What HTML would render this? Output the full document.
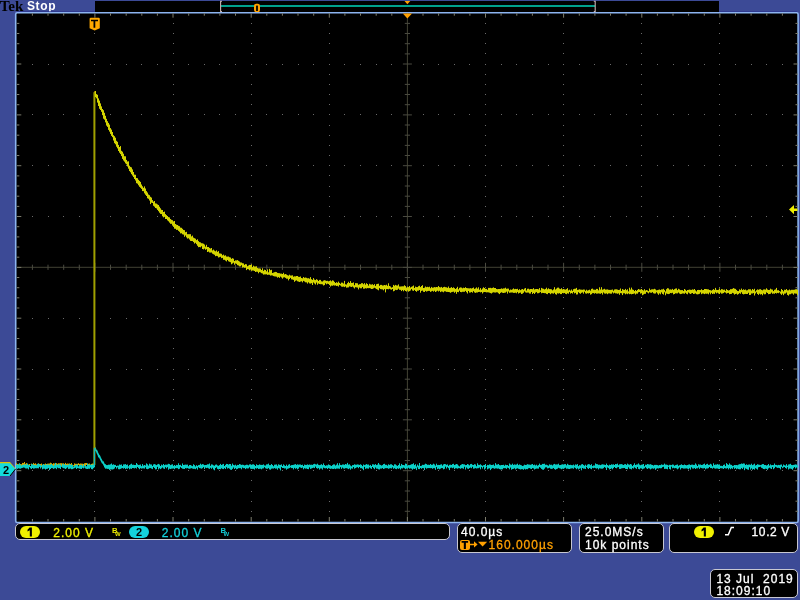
<!DOCTYPE html>
<html><head><meta charset="utf-8"><style>
html,body{margin:0;padding:0;width:800px;height:600px;overflow:hidden;background:#3c4a96}
svg{display:block;position:absolute;left:0;top:0;will-change:transform}
.box{position:absolute;background:#000;border:1px solid #c8c8d2;border-radius:5px;box-sizing:border-box;font-family:"Liberation Sans",sans-serif;font-size:12px;color:#fff;letter-spacing:1px;white-space:pre;-webkit-text-stroke:0.3px currentColor;will-change:transform}
.t{position:absolute;line-height:12px}
.badge{position:absolute;border-radius:6px;color:#000;font-weight:bold;text-align:center;font-size:11px;line-height:12px;letter-spacing:0;-webkit-text-stroke:0}
</style></head><body>
<svg width="800" height="600" viewBox="0 0 800 600">
<rect width="800" height="600" fill="#3c4a96"/>
<text x="-0.3" y="11.3" font-family="Liberation Serif" font-weight="bold" font-size="15" fill="#000">Tek</text>
<text x="27" y="9.8" font-family="Liberation Sans" font-weight="bold" font-size="12" letter-spacing="0.6" fill="#fff">Stop</text>
<rect x="17" y="11.3" width="780" height="1" fill="#2a348c"/>
<rect x="95" y="1" width="624" height="11.5" fill="#000"/>
<rect x="221" y="5" width="374" height="2" fill="#00a08c"/>
<path d="M222 1.3H220.6V11.6H222" stroke="#c8b4b4" stroke-width="1.1" fill="none"/>
<path d="M593.8 1.3H595.2V11.6H593.8" stroke="#c8b4b4" stroke-width="1.1" fill="none"/>
<rect x="254" y="3.8" width="6" height="8.4" rx="2.2" fill="#ffa000"/><rect x="256.1" y="5.6" width="1.8" height="5.4" fill="#000"/>
<path d="M404.5 1H410.3L407.4 4.2Z" fill="#ffa000"/>
<rect x="15.7" y="12.75" width="782.4" height="509.8" rx="1.5" fill="#000" stroke="#8cb4f0" stroke-width="1.6"/>
<path fill="#6a6a6a" d="M94 23h1v1h-1zM94 33h1v1h-1zM94 43h1v1h-1zM94 53h1v1h-1zM94 64h1v1h-1zM94 74h1v1h-1zM94 84h1v1h-1zM94 94h1v1h-1zM94 104h1v1h-1zM94 114h1v1h-1zM94 125h1v1h-1zM94 135h1v1h-1zM94 145h1v1h-1zM94 155h1v1h-1zM94 165h1v1h-1zM94 175h1v1h-1zM94 186h1v1h-1zM94 196h1v1h-1zM94 206h1v1h-1zM94 216h1v1h-1zM94 226h1v1h-1zM94 236h1v1h-1zM94 247h1v1h-1zM94 257h1v1h-1zM94 267h1v1h-1zM94 277h1v1h-1zM94 287h1v1h-1zM94 297h1v1h-1zM94 308h1v1h-1zM94 318h1v1h-1zM94 328h1v1h-1zM94 338h1v1h-1zM94 348h1v1h-1zM94 358h1v1h-1zM94 369h1v1h-1zM94 379h1v1h-1zM94 389h1v1h-1zM94 399h1v1h-1zM94 409h1v1h-1zM94 419h1v1h-1zM94 430h1v1h-1zM94 440h1v1h-1zM94 450h1v1h-1zM94 460h1v1h-1zM94 470h1v1h-1zM94 480h1v1h-1zM94 491h1v1h-1zM94 501h1v1h-1zM94 511h1v1h-1zM173 23h1v1h-1zM173 33h1v1h-1zM173 43h1v1h-1zM173 53h1v1h-1zM173 64h1v1h-1zM173 74h1v1h-1zM173 84h1v1h-1zM173 94h1v1h-1zM173 104h1v1h-1zM173 114h1v1h-1zM173 125h1v1h-1zM173 135h1v1h-1zM173 145h1v1h-1zM173 155h1v1h-1zM173 165h1v1h-1zM173 175h1v1h-1zM173 186h1v1h-1zM173 196h1v1h-1zM173 206h1v1h-1zM173 216h1v1h-1zM173 226h1v1h-1zM173 236h1v1h-1zM173 247h1v1h-1zM173 257h1v1h-1zM173 267h1v1h-1zM173 277h1v1h-1zM173 287h1v1h-1zM173 297h1v1h-1zM173 308h1v1h-1zM173 318h1v1h-1zM173 328h1v1h-1zM173 338h1v1h-1zM173 348h1v1h-1zM173 358h1v1h-1zM173 369h1v1h-1zM173 379h1v1h-1zM173 389h1v1h-1zM173 399h1v1h-1zM173 409h1v1h-1zM173 419h1v1h-1zM173 430h1v1h-1zM173 440h1v1h-1zM173 450h1v1h-1zM173 460h1v1h-1zM173 470h1v1h-1zM173 480h1v1h-1zM173 491h1v1h-1zM173 501h1v1h-1zM173 511h1v1h-1zM251 23h1v1h-1zM251 33h1v1h-1zM251 43h1v1h-1zM251 53h1v1h-1zM251 64h1v1h-1zM251 74h1v1h-1zM251 84h1v1h-1zM251 94h1v1h-1zM251 104h1v1h-1zM251 114h1v1h-1zM251 125h1v1h-1zM251 135h1v1h-1zM251 145h1v1h-1zM251 155h1v1h-1zM251 165h1v1h-1zM251 175h1v1h-1zM251 186h1v1h-1zM251 196h1v1h-1zM251 206h1v1h-1zM251 216h1v1h-1zM251 226h1v1h-1zM251 236h1v1h-1zM251 247h1v1h-1zM251 257h1v1h-1zM251 267h1v1h-1zM251 277h1v1h-1zM251 287h1v1h-1zM251 297h1v1h-1zM251 308h1v1h-1zM251 318h1v1h-1zM251 328h1v1h-1zM251 338h1v1h-1zM251 348h1v1h-1zM251 358h1v1h-1zM251 369h1v1h-1zM251 379h1v1h-1zM251 389h1v1h-1zM251 399h1v1h-1zM251 409h1v1h-1zM251 419h1v1h-1zM251 430h1v1h-1zM251 440h1v1h-1zM251 450h1v1h-1zM251 460h1v1h-1zM251 470h1v1h-1zM251 480h1v1h-1zM251 491h1v1h-1zM251 501h1v1h-1zM251 511h1v1h-1zM329 23h1v1h-1zM329 33h1v1h-1zM329 43h1v1h-1zM329 53h1v1h-1zM329 64h1v1h-1zM329 74h1v1h-1zM329 84h1v1h-1zM329 94h1v1h-1zM329 104h1v1h-1zM329 114h1v1h-1zM329 125h1v1h-1zM329 135h1v1h-1zM329 145h1v1h-1zM329 155h1v1h-1zM329 165h1v1h-1zM329 175h1v1h-1zM329 186h1v1h-1zM329 196h1v1h-1zM329 206h1v1h-1zM329 216h1v1h-1zM329 226h1v1h-1zM329 236h1v1h-1zM329 247h1v1h-1zM329 257h1v1h-1zM329 267h1v1h-1zM329 277h1v1h-1zM329 287h1v1h-1zM329 297h1v1h-1zM329 308h1v1h-1zM329 318h1v1h-1zM329 328h1v1h-1zM329 338h1v1h-1zM329 348h1v1h-1zM329 358h1v1h-1zM329 369h1v1h-1zM329 379h1v1h-1zM329 389h1v1h-1zM329 399h1v1h-1zM329 409h1v1h-1zM329 419h1v1h-1zM329 430h1v1h-1zM329 440h1v1h-1zM329 450h1v1h-1zM329 460h1v1h-1zM329 470h1v1h-1zM329 480h1v1h-1zM329 491h1v1h-1zM329 501h1v1h-1zM329 511h1v1h-1zM485 23h1v1h-1zM485 33h1v1h-1zM485 43h1v1h-1zM485 53h1v1h-1zM485 64h1v1h-1zM485 74h1v1h-1zM485 84h1v1h-1zM485 94h1v1h-1zM485 104h1v1h-1zM485 114h1v1h-1zM485 125h1v1h-1zM485 135h1v1h-1zM485 145h1v1h-1zM485 155h1v1h-1zM485 165h1v1h-1zM485 175h1v1h-1zM485 186h1v1h-1zM485 196h1v1h-1zM485 206h1v1h-1zM485 216h1v1h-1zM485 226h1v1h-1zM485 236h1v1h-1zM485 247h1v1h-1zM485 257h1v1h-1zM485 267h1v1h-1zM485 277h1v1h-1zM485 287h1v1h-1zM485 297h1v1h-1zM485 308h1v1h-1zM485 318h1v1h-1zM485 328h1v1h-1zM485 338h1v1h-1zM485 348h1v1h-1zM485 358h1v1h-1zM485 369h1v1h-1zM485 379h1v1h-1zM485 389h1v1h-1zM485 399h1v1h-1zM485 409h1v1h-1zM485 419h1v1h-1zM485 430h1v1h-1zM485 440h1v1h-1zM485 450h1v1h-1zM485 460h1v1h-1zM485 470h1v1h-1zM485 480h1v1h-1zM485 491h1v1h-1zM485 501h1v1h-1zM485 511h1v1h-1zM563 23h1v1h-1zM563 33h1v1h-1zM563 43h1v1h-1zM563 53h1v1h-1zM563 64h1v1h-1zM563 74h1v1h-1zM563 84h1v1h-1zM563 94h1v1h-1zM563 104h1v1h-1zM563 114h1v1h-1zM563 125h1v1h-1zM563 135h1v1h-1zM563 145h1v1h-1zM563 155h1v1h-1zM563 165h1v1h-1zM563 175h1v1h-1zM563 186h1v1h-1zM563 196h1v1h-1zM563 206h1v1h-1zM563 216h1v1h-1zM563 226h1v1h-1zM563 236h1v1h-1zM563 247h1v1h-1zM563 257h1v1h-1zM563 267h1v1h-1zM563 277h1v1h-1zM563 287h1v1h-1zM563 297h1v1h-1zM563 308h1v1h-1zM563 318h1v1h-1zM563 328h1v1h-1zM563 338h1v1h-1zM563 348h1v1h-1zM563 358h1v1h-1zM563 369h1v1h-1zM563 379h1v1h-1zM563 389h1v1h-1zM563 399h1v1h-1zM563 409h1v1h-1zM563 419h1v1h-1zM563 430h1v1h-1zM563 440h1v1h-1zM563 450h1v1h-1zM563 460h1v1h-1zM563 470h1v1h-1zM563 480h1v1h-1zM563 491h1v1h-1zM563 501h1v1h-1zM563 511h1v1h-1zM641 23h1v1h-1zM641 33h1v1h-1zM641 43h1v1h-1zM641 53h1v1h-1zM641 64h1v1h-1zM641 74h1v1h-1zM641 84h1v1h-1zM641 94h1v1h-1zM641 104h1v1h-1zM641 114h1v1h-1zM641 125h1v1h-1zM641 135h1v1h-1zM641 145h1v1h-1zM641 155h1v1h-1zM641 165h1v1h-1zM641 175h1v1h-1zM641 186h1v1h-1zM641 196h1v1h-1zM641 206h1v1h-1zM641 216h1v1h-1zM641 226h1v1h-1zM641 236h1v1h-1zM641 247h1v1h-1zM641 257h1v1h-1zM641 267h1v1h-1zM641 277h1v1h-1zM641 287h1v1h-1zM641 297h1v1h-1zM641 308h1v1h-1zM641 318h1v1h-1zM641 328h1v1h-1zM641 338h1v1h-1zM641 348h1v1h-1zM641 358h1v1h-1zM641 369h1v1h-1zM641 379h1v1h-1zM641 389h1v1h-1zM641 399h1v1h-1zM641 409h1v1h-1zM641 419h1v1h-1zM641 430h1v1h-1zM641 440h1v1h-1zM641 450h1v1h-1zM641 460h1v1h-1zM641 470h1v1h-1zM641 480h1v1h-1zM641 491h1v1h-1zM641 501h1v1h-1zM641 511h1v1h-1zM719 23h1v1h-1zM719 33h1v1h-1zM719 43h1v1h-1zM719 53h1v1h-1zM719 64h1v1h-1zM719 74h1v1h-1zM719 84h1v1h-1zM719 94h1v1h-1zM719 104h1v1h-1zM719 114h1v1h-1zM719 125h1v1h-1zM719 135h1v1h-1zM719 145h1v1h-1zM719 155h1v1h-1zM719 165h1v1h-1zM719 175h1v1h-1zM719 186h1v1h-1zM719 196h1v1h-1zM719 206h1v1h-1zM719 216h1v1h-1zM719 226h1v1h-1zM719 236h1v1h-1zM719 247h1v1h-1zM719 257h1v1h-1zM719 267h1v1h-1zM719 277h1v1h-1zM719 287h1v1h-1zM719 297h1v1h-1zM719 308h1v1h-1zM719 318h1v1h-1zM719 328h1v1h-1zM719 338h1v1h-1zM719 348h1v1h-1zM719 358h1v1h-1zM719 369h1v1h-1zM719 379h1v1h-1zM719 389h1v1h-1zM719 399h1v1h-1zM719 409h1v1h-1zM719 419h1v1h-1zM719 430h1v1h-1zM719 440h1v1h-1zM719 450h1v1h-1zM719 460h1v1h-1zM719 470h1v1h-1zM719 480h1v1h-1zM719 491h1v1h-1zM719 501h1v1h-1zM719 511h1v1h-1zM32 64h1v1h-1zM48 64h1v1h-1zM63 64h1v1h-1zM79 64h1v1h-1zM110 64h1v1h-1zM126 64h1v1h-1zM141 64h1v1h-1zM157 64h1v1h-1zM188 64h1v1h-1zM204 64h1v1h-1zM219 64h1v1h-1zM235 64h1v1h-1zM266 64h1v1h-1zM282 64h1v1h-1zM298 64h1v1h-1zM313 64h1v1h-1zM344 64h1v1h-1zM360 64h1v1h-1zM376 64h1v1h-1zM391 64h1v1h-1zM423 64h1v1h-1zM438 64h1v1h-1zM454 64h1v1h-1zM469 64h1v1h-1zM501 64h1v1h-1zM516 64h1v1h-1zM532 64h1v1h-1zM548 64h1v1h-1zM579 64h1v1h-1zM594 64h1v1h-1zM610 64h1v1h-1zM626 64h1v1h-1zM657 64h1v1h-1zM673 64h1v1h-1zM688 64h1v1h-1zM704 64h1v1h-1zM735 64h1v1h-1zM751 64h1v1h-1zM766 64h1v1h-1zM782 64h1v1h-1zM32 114h1v1h-1zM48 114h1v1h-1zM63 114h1v1h-1zM79 114h1v1h-1zM110 114h1v1h-1zM126 114h1v1h-1zM141 114h1v1h-1zM157 114h1v1h-1zM188 114h1v1h-1zM204 114h1v1h-1zM219 114h1v1h-1zM235 114h1v1h-1zM266 114h1v1h-1zM282 114h1v1h-1zM298 114h1v1h-1zM313 114h1v1h-1zM344 114h1v1h-1zM360 114h1v1h-1zM376 114h1v1h-1zM391 114h1v1h-1zM423 114h1v1h-1zM438 114h1v1h-1zM454 114h1v1h-1zM469 114h1v1h-1zM501 114h1v1h-1zM516 114h1v1h-1zM532 114h1v1h-1zM548 114h1v1h-1zM579 114h1v1h-1zM594 114h1v1h-1zM610 114h1v1h-1zM626 114h1v1h-1zM657 114h1v1h-1zM673 114h1v1h-1zM688 114h1v1h-1zM704 114h1v1h-1zM735 114h1v1h-1zM751 114h1v1h-1zM766 114h1v1h-1zM782 114h1v1h-1zM32 165h1v1h-1zM48 165h1v1h-1zM63 165h1v1h-1zM79 165h1v1h-1zM110 165h1v1h-1zM126 165h1v1h-1zM141 165h1v1h-1zM157 165h1v1h-1zM188 165h1v1h-1zM204 165h1v1h-1zM219 165h1v1h-1zM235 165h1v1h-1zM266 165h1v1h-1zM282 165h1v1h-1zM298 165h1v1h-1zM313 165h1v1h-1zM344 165h1v1h-1zM360 165h1v1h-1zM376 165h1v1h-1zM391 165h1v1h-1zM423 165h1v1h-1zM438 165h1v1h-1zM454 165h1v1h-1zM469 165h1v1h-1zM501 165h1v1h-1zM516 165h1v1h-1zM532 165h1v1h-1zM548 165h1v1h-1zM579 165h1v1h-1zM594 165h1v1h-1zM610 165h1v1h-1zM626 165h1v1h-1zM657 165h1v1h-1zM673 165h1v1h-1zM688 165h1v1h-1zM704 165h1v1h-1zM735 165h1v1h-1zM751 165h1v1h-1zM766 165h1v1h-1zM782 165h1v1h-1zM32 216h1v1h-1zM48 216h1v1h-1zM63 216h1v1h-1zM79 216h1v1h-1zM110 216h1v1h-1zM126 216h1v1h-1zM141 216h1v1h-1zM157 216h1v1h-1zM188 216h1v1h-1zM204 216h1v1h-1zM219 216h1v1h-1zM235 216h1v1h-1zM266 216h1v1h-1zM282 216h1v1h-1zM298 216h1v1h-1zM313 216h1v1h-1zM344 216h1v1h-1zM360 216h1v1h-1zM376 216h1v1h-1zM391 216h1v1h-1zM423 216h1v1h-1zM438 216h1v1h-1zM454 216h1v1h-1zM469 216h1v1h-1zM501 216h1v1h-1zM516 216h1v1h-1zM532 216h1v1h-1zM548 216h1v1h-1zM579 216h1v1h-1zM594 216h1v1h-1zM610 216h1v1h-1zM626 216h1v1h-1zM657 216h1v1h-1zM673 216h1v1h-1zM688 216h1v1h-1zM704 216h1v1h-1zM735 216h1v1h-1zM751 216h1v1h-1zM766 216h1v1h-1zM782 216h1v1h-1zM32 318h1v1h-1zM48 318h1v1h-1zM63 318h1v1h-1zM79 318h1v1h-1zM110 318h1v1h-1zM126 318h1v1h-1zM141 318h1v1h-1zM157 318h1v1h-1zM188 318h1v1h-1zM204 318h1v1h-1zM219 318h1v1h-1zM235 318h1v1h-1zM266 318h1v1h-1zM282 318h1v1h-1zM298 318h1v1h-1zM313 318h1v1h-1zM344 318h1v1h-1zM360 318h1v1h-1zM376 318h1v1h-1zM391 318h1v1h-1zM423 318h1v1h-1zM438 318h1v1h-1zM454 318h1v1h-1zM469 318h1v1h-1zM501 318h1v1h-1zM516 318h1v1h-1zM532 318h1v1h-1zM548 318h1v1h-1zM579 318h1v1h-1zM594 318h1v1h-1zM610 318h1v1h-1zM626 318h1v1h-1zM657 318h1v1h-1zM673 318h1v1h-1zM688 318h1v1h-1zM704 318h1v1h-1zM735 318h1v1h-1zM751 318h1v1h-1zM766 318h1v1h-1zM782 318h1v1h-1zM32 369h1v1h-1zM48 369h1v1h-1zM63 369h1v1h-1zM79 369h1v1h-1zM110 369h1v1h-1zM126 369h1v1h-1zM141 369h1v1h-1zM157 369h1v1h-1zM188 369h1v1h-1zM204 369h1v1h-1zM219 369h1v1h-1zM235 369h1v1h-1zM266 369h1v1h-1zM282 369h1v1h-1zM298 369h1v1h-1zM313 369h1v1h-1zM344 369h1v1h-1zM360 369h1v1h-1zM376 369h1v1h-1zM391 369h1v1h-1zM423 369h1v1h-1zM438 369h1v1h-1zM454 369h1v1h-1zM469 369h1v1h-1zM501 369h1v1h-1zM516 369h1v1h-1zM532 369h1v1h-1zM548 369h1v1h-1zM579 369h1v1h-1zM594 369h1v1h-1zM610 369h1v1h-1zM626 369h1v1h-1zM657 369h1v1h-1zM673 369h1v1h-1zM688 369h1v1h-1zM704 369h1v1h-1zM735 369h1v1h-1zM751 369h1v1h-1zM766 369h1v1h-1zM782 369h1v1h-1zM32 419h1v1h-1zM48 419h1v1h-1zM63 419h1v1h-1zM79 419h1v1h-1zM110 419h1v1h-1zM126 419h1v1h-1zM141 419h1v1h-1zM157 419h1v1h-1zM188 419h1v1h-1zM204 419h1v1h-1zM219 419h1v1h-1zM235 419h1v1h-1zM266 419h1v1h-1zM282 419h1v1h-1zM298 419h1v1h-1zM313 419h1v1h-1zM344 419h1v1h-1zM360 419h1v1h-1zM376 419h1v1h-1zM391 419h1v1h-1zM423 419h1v1h-1zM438 419h1v1h-1zM454 419h1v1h-1zM469 419h1v1h-1zM501 419h1v1h-1zM516 419h1v1h-1zM532 419h1v1h-1zM548 419h1v1h-1zM579 419h1v1h-1zM594 419h1v1h-1zM610 419h1v1h-1zM626 419h1v1h-1zM657 419h1v1h-1zM673 419h1v1h-1zM688 419h1v1h-1zM704 419h1v1h-1zM735 419h1v1h-1zM751 419h1v1h-1zM766 419h1v1h-1zM782 419h1v1h-1zM32 470h1v1h-1zM48 470h1v1h-1zM63 470h1v1h-1zM79 470h1v1h-1zM110 470h1v1h-1zM126 470h1v1h-1zM141 470h1v1h-1zM157 470h1v1h-1zM188 470h1v1h-1zM204 470h1v1h-1zM219 470h1v1h-1zM235 470h1v1h-1zM266 470h1v1h-1zM282 470h1v1h-1zM298 470h1v1h-1zM313 470h1v1h-1zM344 470h1v1h-1zM360 470h1v1h-1zM376 470h1v1h-1zM391 470h1v1h-1zM423 470h1v1h-1zM438 470h1v1h-1zM454 470h1v1h-1zM469 470h1v1h-1zM501 470h1v1h-1zM516 470h1v1h-1zM532 470h1v1h-1zM548 470h1v1h-1zM579 470h1v1h-1zM594 470h1v1h-1zM610 470h1v1h-1zM626 470h1v1h-1zM657 470h1v1h-1zM673 470h1v1h-1zM688 470h1v1h-1zM704 470h1v1h-1zM735 470h1v1h-1zM751 470h1v1h-1zM766 470h1v1h-1zM782 470h1v1h-1z"/>
<path stroke="#424234" stroke-width="1" fill="none" d="M407.4 13.2V521.5M16.8 267.3H798.0"/><path stroke="#4a4a40" stroke-width="1" fill="none" d="M404.8 23.4H410.0M404.8 33.5H410.0M404.8 43.7H410.0M404.8 53.9H410.0M402.9 64.0H411.9M404.8 74.2H410.0M404.8 84.4H410.0M404.8 94.5H410.0M404.8 104.7H410.0M402.9 114.9H411.9M404.8 125.0H410.0M404.8 135.2H410.0M404.8 145.4H410.0M404.8 155.5H410.0M402.9 165.7H411.9M404.8 175.9H410.0M404.8 186.0H410.0M404.8 196.2H410.0M404.8 206.4H410.0M402.9 216.5H411.9M404.8 226.7H410.0M404.8 236.9H410.0M404.8 247.0H410.0M404.8 257.2H410.0M402.9 267.4H411.9M404.8 277.5H410.0M404.8 287.7H410.0M404.8 297.8H410.0M404.8 308.0H410.0M402.9 318.2H411.9M404.8 328.3H410.0M404.8 338.5H410.0M404.8 348.7H410.0M404.8 358.8H410.0M402.9 369.0H411.9M404.8 379.2H410.0M404.8 389.3H410.0M404.8 399.5H410.0M404.8 409.7H410.0M402.9 419.8H411.9M404.8 430.0H410.0M404.8 440.2H410.0M404.8 450.3H410.0M404.8 460.5H410.0M402.9 470.7H411.9M404.8 480.8H410.0M404.8 491.0H410.0M404.8 501.2H410.0M404.8 511.3H410.0M32.4 264.7V269.9M48.0 264.7V269.9M63.7 264.7V269.9M79.3 264.7V269.9M94.9 262.8V271.8M110.5 264.7V269.9M126.2 264.7V269.9M141.8 264.7V269.9M157.4 264.7V269.9M173.0 262.8V271.8M188.7 264.7V269.9M204.3 264.7V269.9M219.9 264.7V269.9M235.5 264.7V269.9M251.2 262.8V271.8M266.8 264.7V269.9M282.4 264.7V269.9M298.0 264.7V269.9M313.7 264.7V269.9M329.3 262.8V271.8M344.9 264.7V269.9M360.5 264.7V269.9M376.2 264.7V269.9M391.8 264.7V269.9M407.4 262.8V271.8M423.0 264.7V269.9M438.6 264.7V269.9M454.3 264.7V269.9M469.9 264.7V269.9M485.5 262.8V271.8M501.1 264.7V269.9M516.8 264.7V269.9M532.4 264.7V269.9M548.0 264.7V269.9M563.6 262.8V271.8M579.3 264.7V269.9M594.9 264.7V269.9M610.5 264.7V269.9M626.1 264.7V269.9M641.8 262.8V271.8M657.4 264.7V269.9M673.0 264.7V269.9M688.6 264.7V269.9M704.3 264.7V269.9M719.9 262.8V271.8M735.5 264.7V269.9M751.1 264.7V269.9M766.8 264.7V269.9M782.4 264.7V269.9"/><path stroke="#7c7c6c" stroke-width="1" fill="none" d="M16.8 23.4h2.5M798.0 23.4h-2.5M16.8 33.5h2.5M798.0 33.5h-2.5M16.8 43.7h2.5M798.0 43.7h-2.5M16.8 53.9h2.5M798.0 53.9h-2.5M16.8 64.0h4.5M798.0 64.0h-4.5M16.8 74.2h2.5M798.0 74.2h-2.5M16.8 84.4h2.5M798.0 84.4h-2.5M16.8 94.5h2.5M798.0 94.5h-2.5M16.8 104.7h2.5M798.0 104.7h-2.5M16.8 114.9h4.5M798.0 114.9h-4.5M16.8 125.0h2.5M798.0 125.0h-2.5M16.8 135.2h2.5M798.0 135.2h-2.5M16.8 145.4h2.5M798.0 145.4h-2.5M16.8 155.5h2.5M798.0 155.5h-2.5M16.8 165.7h4.5M798.0 165.7h-4.5M16.8 175.9h2.5M798.0 175.9h-2.5M16.8 186.0h2.5M798.0 186.0h-2.5M16.8 196.2h2.5M798.0 196.2h-2.5M16.8 206.4h2.5M798.0 206.4h-2.5M16.8 216.5h4.5M798.0 216.5h-4.5M16.8 226.7h2.5M798.0 226.7h-2.5M16.8 236.9h2.5M798.0 236.9h-2.5M16.8 247.0h2.5M798.0 247.0h-2.5M16.8 257.2h2.5M798.0 257.2h-2.5M16.8 267.4h4.5M798.0 267.4h-4.5M16.8 277.5h2.5M798.0 277.5h-2.5M16.8 287.7h2.5M798.0 287.7h-2.5M16.8 297.8h2.5M798.0 297.8h-2.5M16.8 308.0h2.5M798.0 308.0h-2.5M16.8 318.2h4.5M798.0 318.2h-4.5M16.8 328.3h2.5M798.0 328.3h-2.5M16.8 338.5h2.5M798.0 338.5h-2.5M16.8 348.7h2.5M798.0 348.7h-2.5M16.8 358.8h2.5M798.0 358.8h-2.5M16.8 369.0h4.5M798.0 369.0h-4.5M16.8 379.2h2.5M798.0 379.2h-2.5M16.8 389.3h2.5M798.0 389.3h-2.5M16.8 399.5h2.5M798.0 399.5h-2.5M16.8 409.7h2.5M798.0 409.7h-2.5M16.8 419.8h4.5M798.0 419.8h-4.5M16.8 430.0h2.5M798.0 430.0h-2.5M16.8 440.2h2.5M798.0 440.2h-2.5M16.8 450.3h2.5M798.0 450.3h-2.5M16.8 460.5h2.5M798.0 460.5h-2.5M16.8 470.7h4.5M798.0 470.7h-4.5M16.8 480.8h2.5M798.0 480.8h-2.5M16.8 491.0h2.5M798.0 491.0h-2.5M16.8 501.2h2.5M798.0 501.2h-2.5M16.8 511.3h2.5M798.0 511.3h-2.5M32.4 13.2v2.5M32.4 521.5v-2.5M48.0 13.2v2.5M48.0 521.5v-2.5M63.7 13.2v2.5M63.7 521.5v-2.5M79.3 13.2v2.5M79.3 521.5v-2.5M94.9 13.2v4.5M94.9 521.5v-4.5M110.5 13.2v2.5M110.5 521.5v-2.5M126.2 13.2v2.5M126.2 521.5v-2.5M141.8 13.2v2.5M141.8 521.5v-2.5M157.4 13.2v2.5M157.4 521.5v-2.5M173.0 13.2v4.5M173.0 521.5v-4.5M188.7 13.2v2.5M188.7 521.5v-2.5M204.3 13.2v2.5M204.3 521.5v-2.5M219.9 13.2v2.5M219.9 521.5v-2.5M235.5 13.2v2.5M235.5 521.5v-2.5M251.2 13.2v4.5M251.2 521.5v-4.5M266.8 13.2v2.5M266.8 521.5v-2.5M282.4 13.2v2.5M282.4 521.5v-2.5M298.0 13.2v2.5M298.0 521.5v-2.5M313.7 13.2v2.5M313.7 521.5v-2.5M329.3 13.2v4.5M329.3 521.5v-4.5M344.9 13.2v2.5M344.9 521.5v-2.5M360.5 13.2v2.5M360.5 521.5v-2.5M376.2 13.2v2.5M376.2 521.5v-2.5M391.8 13.2v2.5M391.8 521.5v-2.5M407.4 13.2v4.5M407.4 521.5v-4.5M423.0 13.2v2.5M423.0 521.5v-2.5M438.6 13.2v2.5M438.6 521.5v-2.5M454.3 13.2v2.5M454.3 521.5v-2.5M469.9 13.2v2.5M469.9 521.5v-2.5M485.5 13.2v4.5M485.5 521.5v-4.5M501.1 13.2v2.5M501.1 521.5v-2.5M516.8 13.2v2.5M516.8 521.5v-2.5M532.4 13.2v2.5M532.4 521.5v-2.5M548.0 13.2v2.5M548.0 521.5v-2.5M563.6 13.2v4.5M563.6 521.5v-4.5M579.3 13.2v2.5M579.3 521.5v-2.5M594.9 13.2v2.5M594.9 521.5v-2.5M610.5 13.2v2.5M610.5 521.5v-2.5M626.1 13.2v2.5M626.1 521.5v-2.5M641.8 13.2v4.5M641.8 521.5v-4.5M657.4 13.2v2.5M657.4 521.5v-2.5M673.0 13.2v2.5M673.0 521.5v-2.5M688.6 13.2v2.5M688.6 521.5v-2.5M704.3 13.2v2.5M704.3 521.5v-2.5M719.9 13.2v4.5M719.9 521.5v-4.5M735.5 13.2v2.5M735.5 521.5v-2.5M751.1 13.2v2.5M751.1 521.5v-2.5M766.8 13.2v2.5M766.8 521.5v-2.5M782.4 13.2v2.5M782.4 521.5v-2.5"/>
<path stroke="#d8a800" stroke-width="1" d="M16.5 463.3V466.2M17.5 464.2V466.0M18.5 463.9V464.9M19.5 463.9V466.2M20.5 464.0V466.7M21.5 464.2V466.1M22.5 462.9V466.4M23.5 463.1V466.0M24.5 462.0V466.0M25.5 463.8V465.1M26.5 463.1V466.7M27.5 465.4V466.0M28.5 464.5V466.1M29.5 464.0V466.3M30.5 464.6V465.0M31.5 463.7V465.5M32.5 464.3V465.9M33.5 462.9V466.2M34.5 463.9V466.6M35.5 463.3V467.1M36.5 464.4V466.4M37.5 464.0V466.8M38.5 463.3V466.2M39.5 463.9V466.3M40.5 464.0V466.4M41.5 463.5V467.4M42.5 465.2V464.9M43.5 464.0V467.1M44.5 464.3V466.9M45.5 463.5V466.7M46.5 464.0V466.1M47.5 463.7V466.1M48.5 463.6V466.4M49.5 463.5V466.2M50.5 462.7V466.1M51.5 463.2V466.1M52.5 464.1V468.1M53.5 463.2V466.6M54.5 463.5V466.3M55.5 463.6V466.5M56.5 463.2V466.4M57.5 463.8V466.2M58.5 463.3V466.7M59.5 463.4V465.1M60.5 463.2V465.0M61.5 463.2V466.0M62.5 463.5V465.4M63.5 463.3V466.5M64.5 464.5V466.8M65.5 462.9V466.6M66.5 463.9V466.3M67.5 463.5V466.8M68.5 463.7V465.7M69.5 463.5V466.5M70.5 463.9V466.1M71.5 463.1V466.2M72.5 464.9V464.8M73.5 465.1V466.3M74.5 463.4V466.6M75.5 463.8V465.9M76.5 463.8V466.2M77.5 463.8V466.7M78.5 463.2V465.2M79.5 463.9V466.3M80.5 463.5V466.3M81.5 463.6V467.4M82.5 463.7V466.9M83.5 463.9V466.4M84.5 463.3V466.1M85.5 463.0V465.7M86.5 463.0V465.0M87.5 463.8V466.4M88.5 463.8V466.3M89.5 463.5V466.8M90.5 464.8V466.1M91.5 463.9V466.8M92.5 463.5V466.2M93.5 463.7V466.2M94.5 91.4V466.1"/>
<path stroke="#0cd0c8" stroke-width="1" d="M16.5 465.0V468.2M17.5 463.9V468.9M18.5 465.0V468.3M19.5 463.3V468.6M20.5 464.5V468.7M21.5 465.5V468.2M22.5 464.8V467.9M23.5 464.8V467.5M24.5 464.4V467.7M25.5 464.4V468.4M26.5 464.8V468.5M27.5 463.5V468.4M28.5 465.0V469.4M29.5 464.9V467.2M30.5 466.0V468.3M31.5 463.8V469.0M32.5 464.5V468.0M33.5 464.4V468.7M34.5 465.1V468.5M35.5 465.0V468.2M36.5 465.4V468.3M37.5 463.8V468.2M38.5 463.7V468.4M39.5 464.3V466.9M40.5 464.8V468.5M41.5 465.7V467.0M42.5 464.7V469.3M43.5 464.2V468.7M44.5 464.9V468.7M45.5 464.9V469.6M46.5 464.2V468.9M47.5 464.9V468.8M48.5 464.4V468.1M49.5 464.9V470.1M50.5 464.6V469.0M51.5 463.9V468.1M52.5 465.0V468.1M53.5 465.8V468.9M54.5 464.6V468.4M55.5 462.9V468.2M56.5 465.2V469.2M57.5 464.2V467.6M58.5 464.9V468.2M59.5 464.0V468.2M60.5 464.5V469.0M61.5 465.7V466.9M62.5 463.8V467.7M63.5 464.8V468.2M64.5 463.9V468.4M65.5 465.0V469.0M66.5 464.8V468.3M67.5 465.1V467.4M68.5 464.7V468.9M69.5 463.9V468.8M70.5 464.4V468.5M71.5 464.9V469.2M72.5 464.7V469.1M73.5 466.6V468.6M74.5 465.7V468.2M75.5 464.9V467.7M76.5 464.7V469.0M77.5 464.6V468.1M78.5 466.3V468.3M79.5 465.1V468.6M80.5 464.9V468.8M81.5 464.7V469.0M82.5 465.8V467.8M83.5 464.2V468.4M84.5 466.3V467.6M85.5 464.9V468.5M86.5 466.2V468.9M87.5 463.4V469.0M88.5 464.9V468.7M89.5 464.4V468.8M90.5 464.6V467.6M91.5 464.8V469.1M92.5 464.5V469.3M93.5 464.1V468.2M94.5 445.6V467.3M104.5 464.0V467.5M105.5 464.4V468.7M106.5 465.1V468.6M107.5 465.1V468.9M108.5 464.7V468.9M109.5 464.7V469.9M110.5 464.3V469.5M111.5 463.5V469.4M112.5 464.8V469.5M113.5 464.3V469.2M114.5 464.9V468.5M115.5 464.9V467.0M116.5 466.0V468.6M117.5 465.6V467.4M118.5 465.6V469.2M119.5 464.5V469.3M120.5 464.8V468.9M121.5 464.5V468.4M122.5 466.0V468.1M123.5 464.4V468.7M124.5 464.4V468.1M125.5 464.1V469.1M126.5 464.9V468.5M127.5 464.5V468.8M128.5 466.3V467.8M129.5 465.0V469.3M130.5 464.4V468.6M131.5 463.7V468.9M132.5 464.8V468.0M133.5 464.7V468.1M134.5 465.0V468.4M135.5 465.0V467.9M136.5 463.0V468.6M137.5 464.3V467.0M138.5 465.0V468.1M139.5 464.8V469.2M140.5 464.5V468.2M141.5 466.1V468.6M142.5 464.1V468.4M143.5 465.6V468.4M144.5 465.0V468.6M145.5 465.5V467.3M146.5 463.4V468.9M147.5 464.3V469.2M148.5 465.6V468.8M149.5 463.7V468.2M150.5 464.4V468.1M151.5 464.5V468.6M152.5 465.9V469.1M153.5 464.4V467.1M154.5 464.1V468.1M155.5 464.5V469.4M156.5 465.1V469.2M157.5 464.4V466.9M158.5 463.9V469.4M159.5 464.5V468.3M160.5 466.0V469.1M161.5 464.6V468.4M162.5 465.3V467.5M163.5 464.0V468.5M164.5 465.1V468.9M165.5 464.6V467.2M166.5 464.7V468.3M167.5 464.5V467.2M168.5 463.8V469.7M169.5 464.1V468.7M170.5 465.1V469.0M171.5 464.6V468.7M172.5 464.3V468.6M173.5 465.8V468.5M174.5 465.0V469.2M175.5 465.8V468.2M176.5 464.9V468.2M177.5 465.1V468.2M178.5 463.3V469.2M179.5 465.0V468.8M180.5 464.8V467.2M181.5 465.9V468.1M182.5 463.5V468.7M183.5 465.0V468.9M184.5 464.8V469.0M185.5 464.6V468.1M186.5 464.7V468.4M187.5 464.6V468.1M188.5 466.2V468.6M189.5 465.0V468.8M190.5 465.0V468.5M191.5 465.6V468.2M192.5 466.1V468.6M193.5 464.3V468.9M194.5 465.1V468.8M195.5 466.4V469.2M196.5 465.2V468.2M197.5 465.9V469.6M198.5 465.1V467.3M199.5 464.9V468.1M200.5 463.7V468.3M201.5 464.7V468.7M202.5 464.1V468.2M203.5 464.4V467.2M204.5 465.1V469.0M205.5 465.0V467.6M206.5 464.9V468.1M207.5 464.3V467.8M208.5 464.3V468.4M209.5 463.5V468.9M210.5 465.8V467.8M211.5 464.4V468.8M212.5 464.6V467.7M213.5 465.3V469.4M214.5 465.7V470.3M215.5 464.7V468.1M216.5 464.5V467.3M217.5 465.4V468.9M218.5 465.8V469.4M219.5 465.1V469.0M220.5 463.9V469.2M221.5 465.0V468.3M222.5 464.4V468.9M223.5 463.9V469.1M224.5 466.0V468.1M225.5 464.9V469.0M226.5 463.9V467.2M227.5 464.0V468.6M228.5 464.6V468.1M229.5 464.0V468.7M230.5 464.0V469.7M231.5 465.7V469.9M232.5 463.6V468.9M233.5 464.9V467.5M234.5 465.3V469.0M235.5 464.7V468.2M236.5 465.7V469.3M237.5 464.9V468.9M238.5 465.0V468.2M239.5 464.0V468.2M240.5 464.4V468.2M241.5 464.9V469.3M242.5 464.7V467.6M243.5 464.9V468.2M244.5 465.4V468.1M245.5 465.1V469.1M246.5 464.7V468.3M247.5 464.8V468.5M248.5 465.3V468.4M249.5 464.4V467.3M250.5 464.3V468.7M251.5 464.8V468.9M252.5 464.4V468.9M253.5 464.3V468.9M254.5 464.9V469.6M255.5 466.0V468.2M256.5 464.3V468.7M257.5 465.1V468.1M258.5 465.1V469.0M259.5 464.4V468.8M260.5 464.8V468.7M261.5 464.9V469.3M262.5 464.9V468.5M263.5 464.4V468.4M264.5 465.4V467.2M265.5 465.5V468.3M266.5 464.4V468.7M267.5 464.3V468.8M268.5 463.6V468.1M269.5 465.1V469.4M270.5 465.1V469.7M271.5 464.0V468.7M272.5 465.0V468.5M273.5 466.2V468.6M274.5 464.7V468.1M275.5 464.6V468.7M276.5 464.4V468.5M277.5 465.7V469.7M278.5 464.3V468.1M279.5 464.8V468.6M280.5 464.9V470.4M281.5 464.4V467.1M282.5 466.0V468.0M283.5 464.4V468.0M284.5 465.3V468.5M285.5 466.0V468.4M286.5 464.6V469.7M287.5 465.9V468.8M288.5 464.7V468.5M289.5 464.2V468.1M290.5 465.7V467.4M291.5 465.1V468.1M292.5 465.0V468.1M293.5 464.8V469.4M294.5 464.5V467.9M295.5 464.1V468.8M296.5 464.9V468.2M297.5 464.3V469.3M298.5 464.7V468.6M299.5 464.5V467.2M300.5 464.5V467.6M301.5 465.0V468.1M302.5 464.7V467.6M303.5 466.0V469.3M304.5 464.6V468.2M305.5 464.9V468.7M306.5 464.9V468.5M307.5 464.4V469.0M308.5 464.9V469.2M309.5 464.5V467.4M310.5 464.8V468.9M311.5 464.7V468.5M312.5 464.9V468.1M313.5 464.2V467.7M314.5 463.8V468.1M315.5 464.3V466.6M316.5 464.5V468.1M317.5 463.7V468.7M318.5 464.8V468.1M319.5 465.1V469.6M320.5 464.8V468.5M321.5 464.2V468.5M322.5 465.1V469.6M323.5 463.4V467.7M324.5 465.0V468.2M325.5 465.8V468.4M326.5 465.3V468.1M327.5 465.3V469.0M328.5 464.4V468.1M329.5 464.9V468.6M330.5 465.4V468.9M331.5 466.0V468.6M332.5 465.1V468.9M333.5 464.4V469.0M334.5 464.4V468.6M335.5 465.5V469.1M336.5 464.7V468.6M337.5 463.2V468.6M338.5 465.3V468.6M339.5 463.2V468.8M340.5 464.9V467.2M341.5 465.1V468.9M342.5 464.5V467.6M343.5 464.5V468.5M344.5 464.8V468.7M345.5 464.0V468.2M346.5 464.4V468.2M347.5 462.9V468.5M348.5 464.6V469.1M349.5 464.3V468.4M350.5 465.5V469.7M351.5 466.3V468.4M352.5 465.1V468.7M353.5 465.1V467.1M354.5 464.3V468.7M355.5 464.7V468.1M356.5 464.7V467.5M357.5 464.4V467.2M358.5 464.6V468.2M359.5 464.9V467.0M360.5 464.3V468.2M361.5 464.9V468.2M362.5 466.1V468.8M363.5 464.5V470.2M364.5 465.1V466.9M365.5 464.7V468.9M366.5 464.1V468.4M367.5 464.6V468.5M368.5 464.5V468.7M369.5 465.6V467.4M370.5 464.9V468.3M371.5 466.0V468.9M372.5 464.3V467.0M373.5 464.4V468.2M374.5 464.8V469.2M375.5 464.1V467.5M376.5 465.1V468.7M377.5 464.6V468.7M378.5 463.0V469.3M379.5 464.5V469.5M380.5 464.9V468.6M381.5 465.5V468.6M382.5 465.1V468.1M383.5 464.1V469.0M384.5 463.8V468.6M385.5 464.8V468.2M386.5 464.8V468.2M387.5 465.6V468.2M388.5 464.3V468.8M389.5 464.9V468.4M390.5 464.3V468.2M391.5 464.3V468.5M392.5 465.1V467.4M393.5 465.8V468.8M394.5 464.3V468.2M395.5 464.4V468.9M396.5 465.3V469.2M397.5 465.9V468.3M398.5 465.0V468.9M399.5 463.3V468.3M400.5 465.8V469.5M401.5 463.9V468.3M402.5 464.9V468.5M403.5 465.0V467.7M404.5 465.3V468.3M405.5 463.6V469.2M406.5 463.9V468.5M407.5 465.6V468.7M408.5 465.1V467.8M409.5 465.1V468.7M410.5 464.8V468.4M411.5 464.3V468.7M412.5 464.1V469.7M413.5 463.3V468.7M414.5 465.1V469.0M415.5 464.2V468.4M416.5 466.4V470.1M417.5 464.6V467.4M418.5 465.7V469.1M419.5 463.0V469.1M420.5 466.0V468.0M421.5 465.7V468.8M422.5 464.8V468.1M423.5 464.9V468.2M424.5 464.6V470.0M425.5 463.7V467.8M426.5 464.1V468.7M427.5 464.8V468.2M428.5 464.7V468.1M429.5 464.9V468.1M430.5 464.0V468.2M431.5 464.8V468.1M432.5 464.7V468.8M433.5 463.7V468.2M434.5 464.4V468.2M435.5 465.6V469.8M436.5 463.7V467.1M437.5 465.1V469.1M438.5 464.9V468.6M439.5 465.0V469.3M440.5 464.6V468.7M441.5 464.3V468.1M442.5 465.6V468.1M443.5 464.4V469.3M444.5 464.0V468.8M445.5 464.2V466.7M446.5 464.8V468.5M447.5 464.4V467.2M448.5 465.8V468.2M449.5 464.8V470.1M450.5 464.7V467.8M451.5 465.0V467.6M452.5 464.1V468.2M453.5 463.8V467.6M454.5 465.0V469.1M455.5 464.5V468.3M456.5 464.0V468.3M457.5 464.4V468.7M458.5 465.6V468.2M459.5 466.4V468.2M460.5 465.1V468.8M461.5 464.5V468.2M462.5 464.0V468.3M463.5 464.3V468.8M464.5 464.4V466.8M465.5 465.1V469.5M466.5 465.0V467.5M467.5 464.0V468.6M468.5 464.5V468.9M469.5 465.3V468.1M470.5 464.1V467.6M471.5 463.9V468.2M472.5 464.8V466.8M473.5 465.0V468.7M474.5 464.2V468.5M475.5 464.5V468.1M476.5 466.2V468.5M477.5 463.3V468.3M478.5 464.8V468.2M479.5 464.9V467.6M480.5 464.3V469.3M481.5 465.2V467.1M482.5 465.8V468.6M483.5 465.2V466.8M484.5 465.0V469.5M485.5 464.0V468.5M486.5 466.3V467.0M487.5 464.9V469.3M488.5 465.1V468.6M489.5 464.4V468.3M490.5 464.6V470.1M491.5 465.0V468.8M492.5 464.9V468.1M493.5 464.5V468.3M494.5 465.7V468.8M495.5 463.1V468.4M496.5 464.6V468.4M497.5 464.5V468.7M498.5 464.0V468.5M499.5 465.1V469.1M500.5 465.3V469.4M501.5 465.0V469.4M502.5 465.0V469.3M503.5 464.8V468.2M504.5 465.7V468.2M505.5 464.7V468.2M506.5 465.1V468.9M507.5 465.0V467.7M508.5 465.9V468.1M509.5 463.5V469.3M510.5 464.5V467.6M511.5 464.8V469.7M512.5 463.7V469.1M513.5 464.9V468.9M514.5 464.4V468.3M515.5 464.7V469.4M516.5 464.5V468.7M517.5 463.7V468.3M518.5 465.1V468.8M519.5 464.4V469.1M520.5 464.9V469.5M521.5 465.3V469.2M522.5 466.0V469.2M523.5 465.6V469.8M524.5 464.7V468.8M525.5 465.0V469.5M526.5 464.8V469.1M527.5 464.2V469.2M528.5 464.5V468.3M529.5 464.6V468.1M530.5 464.8V468.7M531.5 464.4V469.0M532.5 464.0V468.1M533.5 465.1V468.4M534.5 464.6V469.5M535.5 465.4V468.9M536.5 464.7V468.6M537.5 465.7V468.6M538.5 465.1V468.7M539.5 463.6V467.1M540.5 464.9V467.8M541.5 464.8V468.9M542.5 463.9V469.6M543.5 463.9V469.8M544.5 463.7V468.7M545.5 464.8V467.4M546.5 464.7V467.3M547.5 465.2V468.4M548.5 465.7V468.2M549.5 464.4V467.8M550.5 464.8V468.7M551.5 464.7V468.9M552.5 465.4V468.7M553.5 464.4V468.1M554.5 463.9V469.1M555.5 464.5V469.7M556.5 464.4V469.1M557.5 464.4V468.7M558.5 463.7V467.8M559.5 465.1V468.3M560.5 465.0V468.6M561.5 464.6V469.2M562.5 464.3V468.7M563.5 464.5V468.9M564.5 464.2V468.3M565.5 464.1V467.7M566.5 465.3V468.8M567.5 463.8V468.6M568.5 464.7V468.9M569.5 465.0V469.0M570.5 464.8V468.6M571.5 465.1V468.4M572.5 465.2V468.3M573.5 464.6V468.8M574.5 465.5V467.5M575.5 464.4V468.2M576.5 464.7V469.2M577.5 464.1V468.3M578.5 466.1V469.4M579.5 465.1V468.7M580.5 465.4V468.3M581.5 464.4V470.3M582.5 464.1V468.0M583.5 464.9V468.7M584.5 465.7V468.6M585.5 464.7V469.0M586.5 465.8V466.9M587.5 464.6V468.2M588.5 464.1V469.0M589.5 464.3V468.0M590.5 465.1V468.6M591.5 464.2V469.2M592.5 466.1V467.8M593.5 465.4V468.2M594.5 465.5V467.8M595.5 463.4V468.2M596.5 464.1V468.6M597.5 464.2V468.2M598.5 464.8V469.4M599.5 464.7V468.3M600.5 465.1V468.5M601.5 464.6V468.7M602.5 464.3V468.7M603.5 464.5V468.2M604.5 464.7V467.1M605.5 465.0V467.8M606.5 463.6V470.0M607.5 465.0V467.5M608.5 465.6V468.1M609.5 464.7V469.4M610.5 465.0V469.0M611.5 464.3V468.4M612.5 464.6V469.3M613.5 464.3V468.1M614.5 465.0V467.0M615.5 464.0V468.0M616.5 464.2V468.3M617.5 463.6V467.4M618.5 465.2V467.1M619.5 464.3V468.9M620.5 464.2V468.9M621.5 464.1V468.4M622.5 464.5V468.2M623.5 465.0V468.1M624.5 464.3V468.0M625.5 464.1V468.9M626.5 464.9V469.0M627.5 463.6V469.2M628.5 464.4V467.3M629.5 464.7V468.7M630.5 464.0V468.9M631.5 464.5V469.4M632.5 466.1V468.1M633.5 464.9V468.6M634.5 463.3V467.4M635.5 465.0V468.2M636.5 464.5V468.9M637.5 464.4V467.0M638.5 463.4V468.9M639.5 464.6V469.3M640.5 465.2V468.3M641.5 464.7V468.5M642.5 464.5V469.3M643.5 464.0V468.7M644.5 466.2V468.3M645.5 464.7V467.2M646.5 464.8V468.3M647.5 464.0V469.0M648.5 464.3V468.2M649.5 464.5V468.5M650.5 464.2V469.4M651.5 464.7V468.7M652.5 465.0V468.4M653.5 465.5V468.8M654.5 464.9V468.3M655.5 464.9V469.8M656.5 464.9V468.7M657.5 465.1V468.3M658.5 465.5V468.5M659.5 465.0V468.1M660.5 465.1V468.3M661.5 464.4V468.2M662.5 464.8V467.2M663.5 464.8V466.8M664.5 463.6V468.9M665.5 464.6V468.8M666.5 464.6V468.9M667.5 464.9V469.3M668.5 465.5V466.9M669.5 464.8V468.9M670.5 464.9V469.5M671.5 465.1V466.7M672.5 464.5V468.3M673.5 464.7V467.8M674.5 465.7V468.3M675.5 465.1V468.1M676.5 464.8V468.4M677.5 464.5V469.3M678.5 465.8V468.5M679.5 465.2V467.4M680.5 464.9V469.5M681.5 464.3V468.2M682.5 465.0V468.2M683.5 465.1V468.6M684.5 464.5V468.6M685.5 465.0V468.5M686.5 465.3V468.4M687.5 465.0V468.7M688.5 464.6V469.4M689.5 464.4V468.3M690.5 465.0V469.6M691.5 464.7V467.3M692.5 464.6V468.5M693.5 464.9V468.6M694.5 464.9V468.1M695.5 463.4V469.0M696.5 464.6V468.3M697.5 466.0V468.4M698.5 464.3V467.5M699.5 464.6V468.9M700.5 464.5V467.7M701.5 465.0V468.1M702.5 464.8V468.4M703.5 464.2V468.4M704.5 463.6V468.1M705.5 465.0V469.3M706.5 464.2V468.5M707.5 463.8V468.5M708.5 464.9V468.2M709.5 464.7V467.0M710.5 463.8V468.1M711.5 464.5V468.1M712.5 466.2V468.7M713.5 463.3V467.8M714.5 464.9V468.4M715.5 464.5V468.7M716.5 464.6V468.5M717.5 464.1V468.5M718.5 464.6V468.9M719.5 464.4V469.0M720.5 465.8V468.2M721.5 465.8V468.3M722.5 466.1V468.4M723.5 464.9V469.0M724.5 464.5V468.1M725.5 466.1V468.4M726.5 463.1V468.6M727.5 464.2V468.1M728.5 464.9V469.4M729.5 463.4V468.2M730.5 464.6V469.2M731.5 464.9V468.3M732.5 465.8V468.9M733.5 465.7V467.4M734.5 465.0V468.9M735.5 465.1V468.2M736.5 465.0V469.2M737.5 465.2V468.6M738.5 464.6V469.1M739.5 464.2V469.3M740.5 464.1V469.3M741.5 463.5V468.1M742.5 463.8V469.0M743.5 463.4V467.6M744.5 463.6V470.2M745.5 465.0V468.4M746.5 464.3V468.9M747.5 464.9V469.5M748.5 464.6V469.8M749.5 464.5V467.3M750.5 464.8V469.6M751.5 463.7V468.4M752.5 465.1V469.7M753.5 464.5V469.0M754.5 463.7V469.7M755.5 465.5V468.2M756.5 465.0V468.8M757.5 464.2V469.6M758.5 464.6V467.3M759.5 464.8V467.0M760.5 465.1V466.7M761.5 464.7V467.8M762.5 464.1V468.3M763.5 464.1V469.0M764.5 465.0V469.2M765.5 465.0V468.7M766.5 465.5V468.9M767.5 465.1V469.8M768.5 464.0V468.4M769.5 465.6V467.7M770.5 464.4V468.4M771.5 465.2V469.0M772.5 465.0V467.1M773.5 465.1V469.2M774.5 463.5V468.2M775.5 464.9V466.8M776.5 464.9V467.4M777.5 465.3V467.9M778.5 464.9V467.8M779.5 465.1V468.1M780.5 464.7V469.4M781.5 464.5V466.9M782.5 466.3V468.2M783.5 464.5V467.4M784.5 465.2V467.0M785.5 465.5V468.0M786.5 464.1V468.7M787.5 465.7V467.2M788.5 464.5V469.5M789.5 464.3V468.6M790.5 463.8V468.6M791.5 464.9V468.9M792.5 465.1V469.8M793.5 464.9V468.3M794.5 464.7V467.1M795.5 464.4V468.5M796.5 464.6V467.5M797.5 465.3V467.8"/><path stroke="#0cd0c8" stroke-width="1.8" fill="none" d="M94.4 447.3 L94.9 448.2 L95.4 449.4 L95.9 450.5 L96.4 450.6 L96.9 451.6 L97.4 452.8 L97.9 453.9 L98.4 454.8 L98.9 456.4 L99.4 456.3 L99.9 457.4 L100.4 458.4 L100.9 459.3 L101.4 460.3 L101.9 461.4 L102.4 462.3 L102.9 462.1 L103.4 463.3 L103.9 464.1 L104.4 465.3 L104.9 465.7 L105.4 465.6 L105.9 467.0"/>
<path stroke="#a0a000" stroke-width="2" d="M94.4 465V92.2"/>
<path stroke="#10b8c0" stroke-width="1.3" d="M94.4 466V448"/>
<path stroke="#d4d400" stroke-width="1" d="M95.5 91.0V97.1M96.5 94.1V98.4M97.5 94.8V102.6M98.5 98.4V106.0M99.5 100.6V108.8M100.5 103.4V110.0M101.5 106.4V111.8M102.5 109.0V115.2M103.5 110.2V118.7M104.5 112.8V119.7M105.5 115.8V122.4M106.5 118.8V125.6M107.5 121.2V126.9M108.5 122.9V129.9M109.5 124.6V131.6M110.5 128.1V133.9M111.5 129.6V135.9M112.5 132.0V137.2M113.5 135.2V140.5M114.5 136.2V143.2M115.5 137.7V144.3M116.5 140.8V146.7M117.5 141.8V148.4M118.5 144.9V151.0M119.5 147.0V152.7M120.5 146.1V154.1M121.5 150.8V156.1M122.5 151.7V158.9M123.5 153.7V160.5M124.5 156.2V161.7M125.5 156.3V163.4M126.5 159.9V164.3M127.5 161.5V166.5M128.5 161.3V168.7M129.5 165.7V171.1M130.5 166.9V172.3M131.5 167.4V174.2M132.5 169.4V175.6M133.5 172.0V177.1M134.5 174.6V179.0M135.5 174.8V180.5M136.5 178.0V183.2M137.5 178.2V183.7M138.5 179.8V185.3M139.5 180.9V186.8M140.5 181.9V187.8M141.5 184.5V188.9M142.5 186.3V191.1M143.5 187.8V191.2M144.5 186.4V193.4M145.5 188.5V194.8M146.5 191.1V196.0M147.5 192.5V198.3M148.5 194.5V198.8M149.5 195.2V200.5M150.5 196.8V204.1M151.5 197.6V202.7M152.5 200.1V203.0M153.5 201.6V205.8M154.5 201.0V206.7M155.5 203.4V208.0M156.5 203.6V208.4M157.5 204.4V209.9M158.5 205.0V211.2M159.5 206.7V212.7M160.5 208.3V213.9M161.5 209.8V214.1M162.5 210.0V216.3M163.5 212.0V217.4M164.5 211.6V216.9M165.5 214.1V219.0M166.5 215.1V219.0M167.5 216.0V220.4M168.5 217.1V221.3M169.5 217.4V222.6M170.5 219.0V223.8M171.5 219.8V223.8M172.5 220.2V225.6M173.5 221.4V226.7M174.5 221.0V228.7M175.5 224.0V228.8M176.5 224.7V229.9M177.5 225.0V229.8M178.5 225.8V230.9M179.5 226.2V231.8M180.5 227.6V233.4M181.5 227.8V233.3M182.5 228.8V234.3M183.5 229.9V234.6M184.5 230.2V236.8M185.5 232.2V235.5M186.5 231.8V237.4M187.5 234.2V238.6M188.5 234.2V238.3M189.5 234.2V239.5M190.5 234.2V240.9M191.5 236.4V241.0M192.5 235.6V241.1M193.5 237.6V242.1M194.5 238.2V243.6M195.5 238.7V242.8M196.5 240.1V244.2M197.5 239.3V245.8M198.5 241.1V247.2M199.5 242.1V247.0M200.5 242.4V247.3M201.5 243.2V246.3M202.5 243.3V249.0M203.5 243.7V249.4M204.5 244.5V248.6M205.5 246.6V249.8M206.5 244.8V249.2M207.5 247.0V252.0M208.5 247.0V251.6M209.5 247.9V252.5M210.5 248.5V252.6M211.5 248.0V252.5M212.5 250.4V253.7M213.5 249.6V254.3M214.5 250.6V254.8M215.5 251.3V256.2M216.5 250.4V255.9M217.5 251.8V256.2M218.5 251.1V257.5M219.5 253.4V257.2M220.5 253.5V256.8M221.5 253.8V258.2M222.5 255.3V257.9M223.5 254.6V259.8M224.5 255.7V259.8M225.5 255.3V260.6M226.5 256.5V261.4M227.5 256.6V260.0M228.5 256.5V261.3M229.5 257.2V261.8M230.5 257.5V262.2M231.5 258.8V264.3M232.5 258.2V263.5M233.5 258.7V262.7M234.5 261.0V264.7M235.5 260.3V263.5M236.5 260.4V263.9M237.5 260.1V265.2M238.5 260.8V265.5M239.5 261.5V266.4M240.5 262.4V266.3M241.5 262.5V265.3M242.5 263.2V267.6M243.5 263.4V267.2M244.5 264.8V267.8M245.5 264.1V267.6M246.5 264.3V270.1M247.5 266.2V269.1M248.5 265.5V269.3M249.5 264.9V270.3M250.5 265.0V269.6M251.5 264.4V270.8M252.5 267.1V270.5M253.5 265.7V270.6M254.5 266.5V271.0M255.5 266.5V272.0M256.5 266.3V271.7M257.5 268.0V271.8M258.5 268.4V273.3M259.5 268.4V272.1M260.5 268.6V272.4M261.5 270.0V273.2M262.5 268.3V273.5M263.5 270.8V274.6M264.5 269.7V274.4M265.5 270.0V274.4M266.5 271.3V274.3M267.5 269.4V274.9M268.5 272.3V274.7M269.5 268.8V274.8M270.5 270.2V275.6M271.5 269.8V275.4M272.5 273.0V275.5M273.5 272.6V276.1M274.5 272.2V276.4M275.5 271.9V276.5M276.5 272.1V276.7M277.5 272.9V277.7M278.5 273.1V277.1M279.5 273.2V277.9M280.5 273.6V276.6M281.5 273.6V277.5M282.5 274.0V278.7M283.5 272.8V277.5M284.5 274.4V277.3M285.5 274.0V277.9M286.5 274.5V278.7M287.5 275.2V278.7M288.5 275.6V280.4M289.5 274.7V279.0M290.5 275.5V277.9M291.5 275.5V279.4M292.5 275.3V279.5M293.5 276.7V279.9M294.5 276.3V281.8M295.5 276.4V280.8M296.5 276.0V280.4M297.5 276.0V281.3M298.5 276.8V281.6M299.5 276.9V282.0M300.5 276.5V281.6M301.5 278.0V281.3M302.5 278.3V282.4M303.5 277.0V280.9M304.5 277.8V281.5M305.5 277.5V282.3M306.5 277.8V282.4M307.5 278.3V283.6M308.5 278.2V282.3M309.5 278.7V283.4M310.5 277.1V283.6M311.5 279.2V283.2M312.5 279.9V285.0M313.5 278.1V282.5M314.5 279.6V283.5M315.5 280.1V284.5M316.5 279.2V282.6M317.5 279.8V284.7M318.5 281.0V283.5M319.5 279.9V284.0M320.5 279.9V284.2M321.5 281.3V284.2M322.5 281.5V284.4M323.5 280.6V285.5M324.5 280.2V285.1M325.5 280.5V283.3M326.5 280.9V284.3M327.5 280.8V283.7M328.5 281.3V284.0M329.5 280.9V285.1M330.5 280.4V286.5M331.5 281.3V285.6M332.5 280.3V285.8M333.5 280.7V285.3M334.5 281.9V285.6M335.5 283.0V285.4M336.5 282.2V286.0M337.5 282.8V285.8M338.5 281.6V286.6M339.5 282.9V285.1M340.5 283.8V285.6M341.5 282.6V286.6M342.5 282.7V286.8M343.5 283.5V286.6M344.5 280.9V287.1M345.5 284.3V286.4M346.5 284.5V287.7M347.5 283.1V287.5M348.5 281.8V287.4M349.5 283.0V286.4M350.5 281.1V286.7M351.5 282.9V287.0M352.5 282.9V286.5M353.5 282.4V287.4M354.5 285.2V288.5M355.5 283.1V287.2M356.5 283.2V287.4M357.5 283.3V287.6M358.5 284.8V289.4M359.5 284.2V287.6M360.5 284.1V288.3M361.5 283.2V288.3M362.5 283.2V287.1M363.5 284.2V288.7M364.5 283.1V288.7M365.5 284.6V288.2M366.5 283.2V288.5M367.5 284.0V288.1M368.5 285.6V288.2M369.5 283.8V288.1M370.5 284.4V288.4M371.5 284.6V289.0M372.5 284.2V288.9M373.5 285.1V288.4M374.5 284.1V287.8M375.5 285.9V288.4M376.5 284.2V289.1M377.5 283.9V289.6M378.5 283.7V290.3M379.5 285.8V288.2M380.5 284.9V289.1M381.5 284.9V289.3M382.5 285.5V289.4M383.5 285.4V290.3M384.5 285.0V289.1M385.5 285.3V292.4M386.5 284.7V289.2M387.5 285.8V289.1M388.5 283.3V289.3M389.5 286.0V288.8M390.5 286.5V289.4M391.5 287.6V289.7M392.5 287.2V289.0M393.5 284.9V291.3M394.5 285.7V290.8M395.5 284.9V289.8M396.5 285.4V290.1M397.5 285.5V289.8M398.5 284.4V288.7M399.5 286.5V289.8M400.5 286.5V289.9M401.5 286.4V291.1M402.5 286.3V290.1M403.5 286.3V291.3M404.5 285.3V290.2M405.5 286.1V291.0M406.5 287.8V291.6M407.5 286.6V290.5M408.5 287.2V291.7M409.5 286.0V291.1M410.5 287.5V290.5M411.5 286.8V289.1M412.5 286.3V290.5M413.5 285.5V290.9M414.5 288.0V289.9M415.5 286.6V291.0M416.5 287.1V291.8M417.5 287.1V290.7M418.5 286.2V290.7M419.5 285.7V290.0M420.5 287.1V292.7M421.5 286.0V290.9M422.5 285.2V290.6M423.5 288.0V291.8M424.5 287.7V292.0M425.5 286.5V290.9M426.5 287.2V291.6M427.5 286.8V291.2M428.5 287.2V290.9M429.5 286.7V290.9M430.5 288.2V291.9M431.5 286.9V291.4M432.5 287.7V290.9M433.5 287.5V291.7M434.5 287.1V290.8M435.5 287.3V292.0M436.5 287.0V291.4M437.5 287.2V290.7M438.5 286.0V291.5M439.5 287.1V290.8M440.5 287.4V292.1M441.5 286.9V291.5M442.5 287.8V291.7M443.5 287.1V292.3M444.5 286.8V291.3M445.5 287.2V291.4M446.5 287.3V291.9M447.5 287.8V291.9M448.5 286.5V292.0M449.5 288.1V292.2M450.5 287.8V292.8M451.5 287.1V292.2M452.5 288.0V291.9M453.5 287.3V291.7M454.5 288.1V292.8M455.5 289.0V291.8M456.5 288.2V293.8M457.5 286.8V292.0M458.5 289.3V292.2M459.5 287.8V290.7M460.5 287.4V292.0M461.5 287.6V292.2M462.5 288.3V291.8M463.5 287.7V291.8M464.5 288.0V291.8M465.5 287.2V290.9M466.5 288.0V292.2M467.5 288.2V293.5M468.5 288.3V291.0M469.5 288.4V292.6M470.5 288.2V292.5M471.5 288.5V292.0M472.5 288.1V292.7M473.5 287.5V291.2M474.5 288.9V292.4M475.5 288.4V292.9M476.5 287.4V292.5M477.5 288.6V292.5M478.5 287.3V292.0M479.5 289.7V291.9M480.5 288.1V292.4M481.5 289.7V292.0M482.5 288.5V293.5M483.5 287.3V292.3M484.5 288.0V292.0M485.5 288.8V292.1M486.5 288.9V292.4M487.5 289.8V292.3M488.5 287.9V292.4M489.5 287.9V292.7M490.5 287.8V293.1M491.5 288.2V293.5M492.5 287.9V292.7M493.5 287.4V292.3M494.5 288.0V292.5M495.5 288.0V292.6M496.5 289.0V292.3M497.5 289.2V292.4M498.5 289.0V293.3M499.5 289.0V294.1M500.5 288.9V292.9M501.5 288.4V292.3M502.5 288.8V292.8M503.5 288.4V293.0M504.5 288.4V292.8M505.5 287.7V292.6M506.5 288.8V291.7M507.5 288.6V293.6M508.5 288.6V291.5M509.5 290.3V292.8M510.5 289.5V292.6M511.5 289.8V292.5M512.5 289.3V292.5M513.5 288.4V292.9M514.5 289.2V292.9M515.5 288.9V292.7M516.5 289.1V293.3M517.5 288.8V292.1M518.5 290.1V293.5M519.5 289.2V292.9M520.5 290.1V292.6M521.5 289.4V294.0M522.5 289.0V293.7M523.5 289.7V292.8M524.5 288.6V291.4M525.5 288.0V292.4M526.5 290.5V292.7M527.5 288.8V292.6M528.5 288.7V292.6M529.5 289.4V293.5M530.5 289.0V293.6M531.5 289.0V292.0M532.5 289.2V294.0M533.5 288.2V293.0M534.5 289.4V294.0M535.5 289.1V292.7M536.5 289.0V292.1M537.5 289.0V293.3M538.5 289.4V293.2M539.5 288.1V292.7M540.5 290.4V291.9M541.5 287.9V293.3M542.5 288.5V292.9M543.5 288.8V293.0M544.5 289.4V293.2M545.5 288.9V293.2M546.5 287.7V293.9M547.5 289.3V294.2M548.5 288.3V293.0M549.5 289.1V293.2M550.5 289.1V294.2M551.5 289.3V293.3M552.5 290.3V293.4M553.5 289.4V293.7M554.5 287.2V292.8M555.5 289.5V294.2M556.5 288.6V294.7M557.5 287.7V293.3M558.5 287.6V293.6M559.5 288.6V293.2M560.5 289.1V294.1M561.5 288.2V294.1M562.5 289.4V293.0M563.5 289.0V293.3M564.5 289.3V293.0M565.5 289.6V293.8M566.5 289.1V294.2M567.5 288.2V293.3M568.5 290.4V293.7M569.5 289.7V292.1M570.5 290.6V293.6M571.5 289.5V293.0M572.5 290.8V293.6M573.5 289.2V292.1M574.5 288.8V293.4M575.5 288.7V292.9M576.5 287.9V294.5M577.5 289.9V294.4M578.5 289.7V292.2M579.5 289.3V293.2M580.5 289.6V293.8M581.5 289.7V292.8M582.5 289.8V292.4M583.5 289.5V293.7M584.5 289.6V291.8M585.5 290.8V293.4M586.5 289.7V293.7M587.5 290.6V293.2M588.5 290.2V293.5M589.5 289.7V293.0M590.5 290.6V294.7M591.5 288.9V294.2M592.5 288.6V293.2M593.5 289.6V293.1M594.5 289.7V293.7M595.5 289.8V293.1M596.5 288.9V293.7M597.5 288.9V293.6M598.5 290.3V293.4M599.5 287.3V293.6M600.5 289.5V293.8M601.5 287.2V293.1M602.5 289.7V294.6M603.5 289.3V292.5M604.5 288.8V293.5M605.5 289.6V293.7M606.5 289.5V293.4M607.5 289.4V294.2M608.5 289.8V293.4M609.5 289.9V293.4M610.5 289.9V293.7M611.5 289.8V293.7M612.5 289.5V292.4M613.5 290.7V293.5M614.5 289.5V292.8M615.5 289.3V293.4M616.5 289.3V293.4M617.5 289.6V293.8M618.5 290.0V293.4M619.5 289.8V294.8M620.5 288.5V293.1M621.5 291.0V293.3M622.5 289.1V295.1M623.5 289.7V293.3M624.5 289.9V293.3M625.5 288.9V294.3M626.5 290.2V293.6M627.5 289.3V294.2M628.5 291.4V293.4M629.5 287.7V294.2M630.5 289.6V293.9M631.5 287.6V294.3M632.5 289.5V294.0M633.5 289.9V293.8M634.5 291.1V293.4M635.5 290.0V294.5M636.5 290.9V293.6M637.5 289.9V293.7M638.5 289.0V292.3M639.5 289.5V292.0M640.5 289.6V293.6M641.5 289.0V293.3M642.5 289.9V295.2M643.5 290.5V294.5M644.5 289.2V293.9M645.5 290.5V293.8M646.5 290.0V292.1M647.5 290.4V292.5M648.5 291.1V293.4M649.5 288.5V292.3M650.5 289.9V292.7M651.5 289.4V292.8M652.5 289.3V292.2M653.5 289.3V293.3M654.5 288.8V293.6M655.5 289.4V293.5M656.5 290.3V292.3M657.5 290.1V293.5M658.5 289.8V294.8M659.5 289.5V293.4M660.5 290.0V294.3M661.5 289.4V292.4M662.5 289.4V293.9M663.5 288.8V294.6M664.5 289.9V292.3M665.5 291.4V295.3M666.5 289.2V293.5M667.5 288.2V293.9M668.5 288.4V294.1M669.5 289.6V293.8M670.5 289.4V293.0M671.5 289.7V293.2M672.5 288.9V292.8M673.5 289.9V294.4M674.5 289.2V294.0M675.5 288.6V293.3M676.5 288.4V293.4M677.5 290.1V293.4M678.5 288.8V292.5M679.5 289.4V293.5M680.5 290.1V294.1M681.5 290.1V293.9M682.5 290.1V293.5M683.5 290.9V293.5M684.5 289.0V293.8M685.5 289.8V292.8M686.5 290.9V293.8M687.5 290.0V294.3M688.5 289.9V292.5M689.5 289.6V293.4M690.5 289.8V294.0M691.5 289.9V293.4M692.5 289.4V293.0M693.5 289.7V294.0M694.5 289.0V293.8M695.5 290.3V293.4M696.5 291.4V294.2M697.5 290.0V294.4M698.5 289.9V294.2M699.5 290.0V293.8M700.5 290.1V292.4M701.5 289.2V294.2M702.5 290.1V293.5M703.5 290.0V293.6M704.5 289.0V294.1M705.5 289.0V293.6M706.5 289.1V293.8M707.5 289.3V293.6M708.5 289.4V294.3M709.5 290.0V292.6M710.5 290.2V294.3M711.5 290.6V292.8M712.5 289.9V294.0M713.5 289.1V293.6M714.5 289.9V293.9M715.5 287.9V292.4M716.5 289.8V293.4M717.5 290.0V292.7M718.5 289.8V293.5M719.5 288.4V294.0M720.5 290.2V292.6M721.5 289.1V293.7M722.5 289.3V293.5M723.5 289.8V293.1M724.5 289.6V292.3M725.5 290.8V292.6M726.5 289.1V293.6M727.5 290.0V293.1M728.5 290.5V292.9M729.5 290.1V294.2M730.5 289.2V294.0M731.5 289.2V293.9M732.5 288.8V292.9M733.5 288.1V293.4M734.5 288.6V294.6M735.5 288.9V294.0M736.5 289.9V293.7M737.5 290.9V294.7M738.5 291.1V294.1M739.5 289.4V293.2M740.5 289.9V293.8M741.5 288.6V292.3M742.5 290.0V293.9M743.5 289.3V294.4M744.5 289.9V294.1M745.5 289.5V293.9M746.5 290.4V294.0M747.5 290.2V294.0M748.5 289.3V292.8M749.5 289.3V295.0M750.5 289.3V294.9M751.5 290.5V293.5M752.5 289.0V293.5M753.5 289.8V293.1M754.5 288.8V295.5M755.5 291.4V293.5M756.5 290.2V292.3M757.5 289.4V294.0M758.5 289.8V294.9M759.5 289.3V293.7M760.5 289.2V294.5M761.5 289.9V294.1M762.5 290.3V295.3M763.5 289.5V293.5M764.5 289.4V294.3M765.5 289.6V294.2M766.5 288.3V292.4M767.5 289.5V293.0M768.5 290.0V294.2M769.5 289.9V294.0M770.5 288.7V293.8M771.5 289.4V292.6M772.5 289.6V293.8M773.5 291.1V293.5M774.5 289.8V293.8M775.5 289.4V293.0M776.5 287.9V293.5M777.5 290.3V292.9M778.5 290.2V293.2M779.5 291.1V292.4M780.5 291.6V293.7M781.5 289.0V294.9M782.5 290.0V293.6M783.5 291.3V295.2M784.5 289.7V293.7M785.5 289.9V293.5M786.5 289.0V292.6M787.5 290.3V294.9M788.5 290.3V295.6M789.5 289.5V294.3M790.5 290.3V294.2M791.5 289.8V293.5M792.5 289.8V293.5M793.5 289.8V294.7M794.5 289.7V293.4M795.5 289.3V293.6M796.5 289.2V293.7M797.5 289.8V295.3"/>
<path d="M402.8 13.6H412L407.4 18.6Z" fill="#ffa000"/>
<path d="M90.5 17.8H99L99.8 18.6V28.2L94.7 30.6L89.6 28.2V18.6Z" fill="#ffa800"/>
<path d="M91 19.7h7v1.5h-2.7v6.6h-1.8v-6.6h-2.5z" fill="#000"/>
<path d="M789 209.6L794 205V208.5H797.5V211H794V214.2Z" fill="#f0f000"/>
<path d="M0 462H10L15.5 468.5L10 476H0Z" fill="#e0c000"/>
<path d="M0 463.2H10L15.5 469L10 476H0Z" fill="#14dcdc"/>
<path d="M10 476L15.5 469" stroke="#000" stroke-width="1"/>
<text x="3" y="474" font-family="Liberation Sans" font-weight="bold" font-size="11" fill="#000">2</text>
</svg>
<div class="box" style="left:15px;top:523.3px;width:434.5px;height:16.7px">
<div class="badge" style="left:4px;top:2px;width:20px;height:12px;background:#f0f000"><svg width="20" height="12.5" style="position:absolute;left:0;top:0"><path d="M9.6 1.6h2.3v8.9h-2.1V4.2L7.5 5.6V3.7z" fill="#000"/></svg></div>
<div class="t" style="left:37.3px;top:2.5px;color:#f0f000">2.00 V</div>
<svg style="position:absolute;left:0;top:0" width="120" height="16"><text x="96" y="8.6" font-size="7.8" font-weight="bold" fill="#e8e800" letter-spacing="0" stroke="none">B</text><text x="99" y="11.8" font-size="6" font-weight="bold" fill="#e8e800" stroke="none" letter-spacing="0">W</text></svg>
<div class="badge" style="left:113px;top:2px;width:20px;height:12px;background:#14d2dc">2</div>
<div class="t" style="left:145.8px;top:2.5px;color:#14d2dc">2.00 V</div>
<svg style="position:absolute;left:0;top:0" width="240" height="16"><text x="204.5" y="8.6" font-size="7.8" font-weight="bold" fill="#14c8d2" stroke="none" letter-spacing="0">B</text><text x="207.5" y="11.8" font-size="6" font-weight="bold" fill="#14c8d2" stroke="none" letter-spacing="0">W</text></svg>
</div>
<div class="box" style="left:457px;top:523.3px;width:114.5px;height:30px">
<div class="t" style="left:3px;top:2px">40.0µs</div>
<div style="position:absolute;left:2px;top:15.5px;width:9.7px;height:10.2px;background:#ffa000;border-radius:2px"></div><svg style="position:absolute;left:0;top:0" width="40" height="30"><path d="M3.6 16.9h6.5v1.8h-2.2v6.2h-2.1v-6.2H3.6z" fill="#000"/><path d="M12 19.8h4.5v1.5h-4.5z M16 17.3L19.6 20.5L16 23.4z M20 17.7h9.2l-4.6 4.8z" fill="#ffa000"/></svg><div class="t" style="left:30.6px;top:15px;color:#ffa000">160.000µs</div>
</div>
<div class="box" style="left:578.5px;top:523.3px;width:84.5px;height:30px">
<div class="t" style="left:5px;top:2px">25.0MS/s</div>
<div class="t" style="left:5px;top:15px">10k points</div>
</div>
<div class="box" style="left:669.2px;top:523.3px;width:129.2px;height:29.9px">
<div class="badge" style="left:23.8px;top:1.5px;width:20px;height:12.5px;background:#f0f000"><svg width="20" height="12.5" style="position:absolute;left:0;top:0"><path d="M9.6 1.6h2.3v8.9h-2.1V4.2L7.5 5.6V3.7z" fill="#000"/></svg></div>
<svg style="position:absolute;left:0;top:0" width="80" height="20"><path d="M55 10.8H58.3L61.3 3.5H64" stroke="#fff" stroke-width="1.5" fill="none"/></svg>
<div class="t" style="left:81.6px;top:2px;letter-spacing:0.6px">10.2 V</div>
</div>
<div class="box" style="left:710px;top:569px;width:88.2px;height:29.4px">
<div class="t" style="left:5.4px;top:2.7px">13 Jul  2019</div>
<div class="t" style="left:5.4px;top:15px">18:09:10</div>
</div>
</body></html>
